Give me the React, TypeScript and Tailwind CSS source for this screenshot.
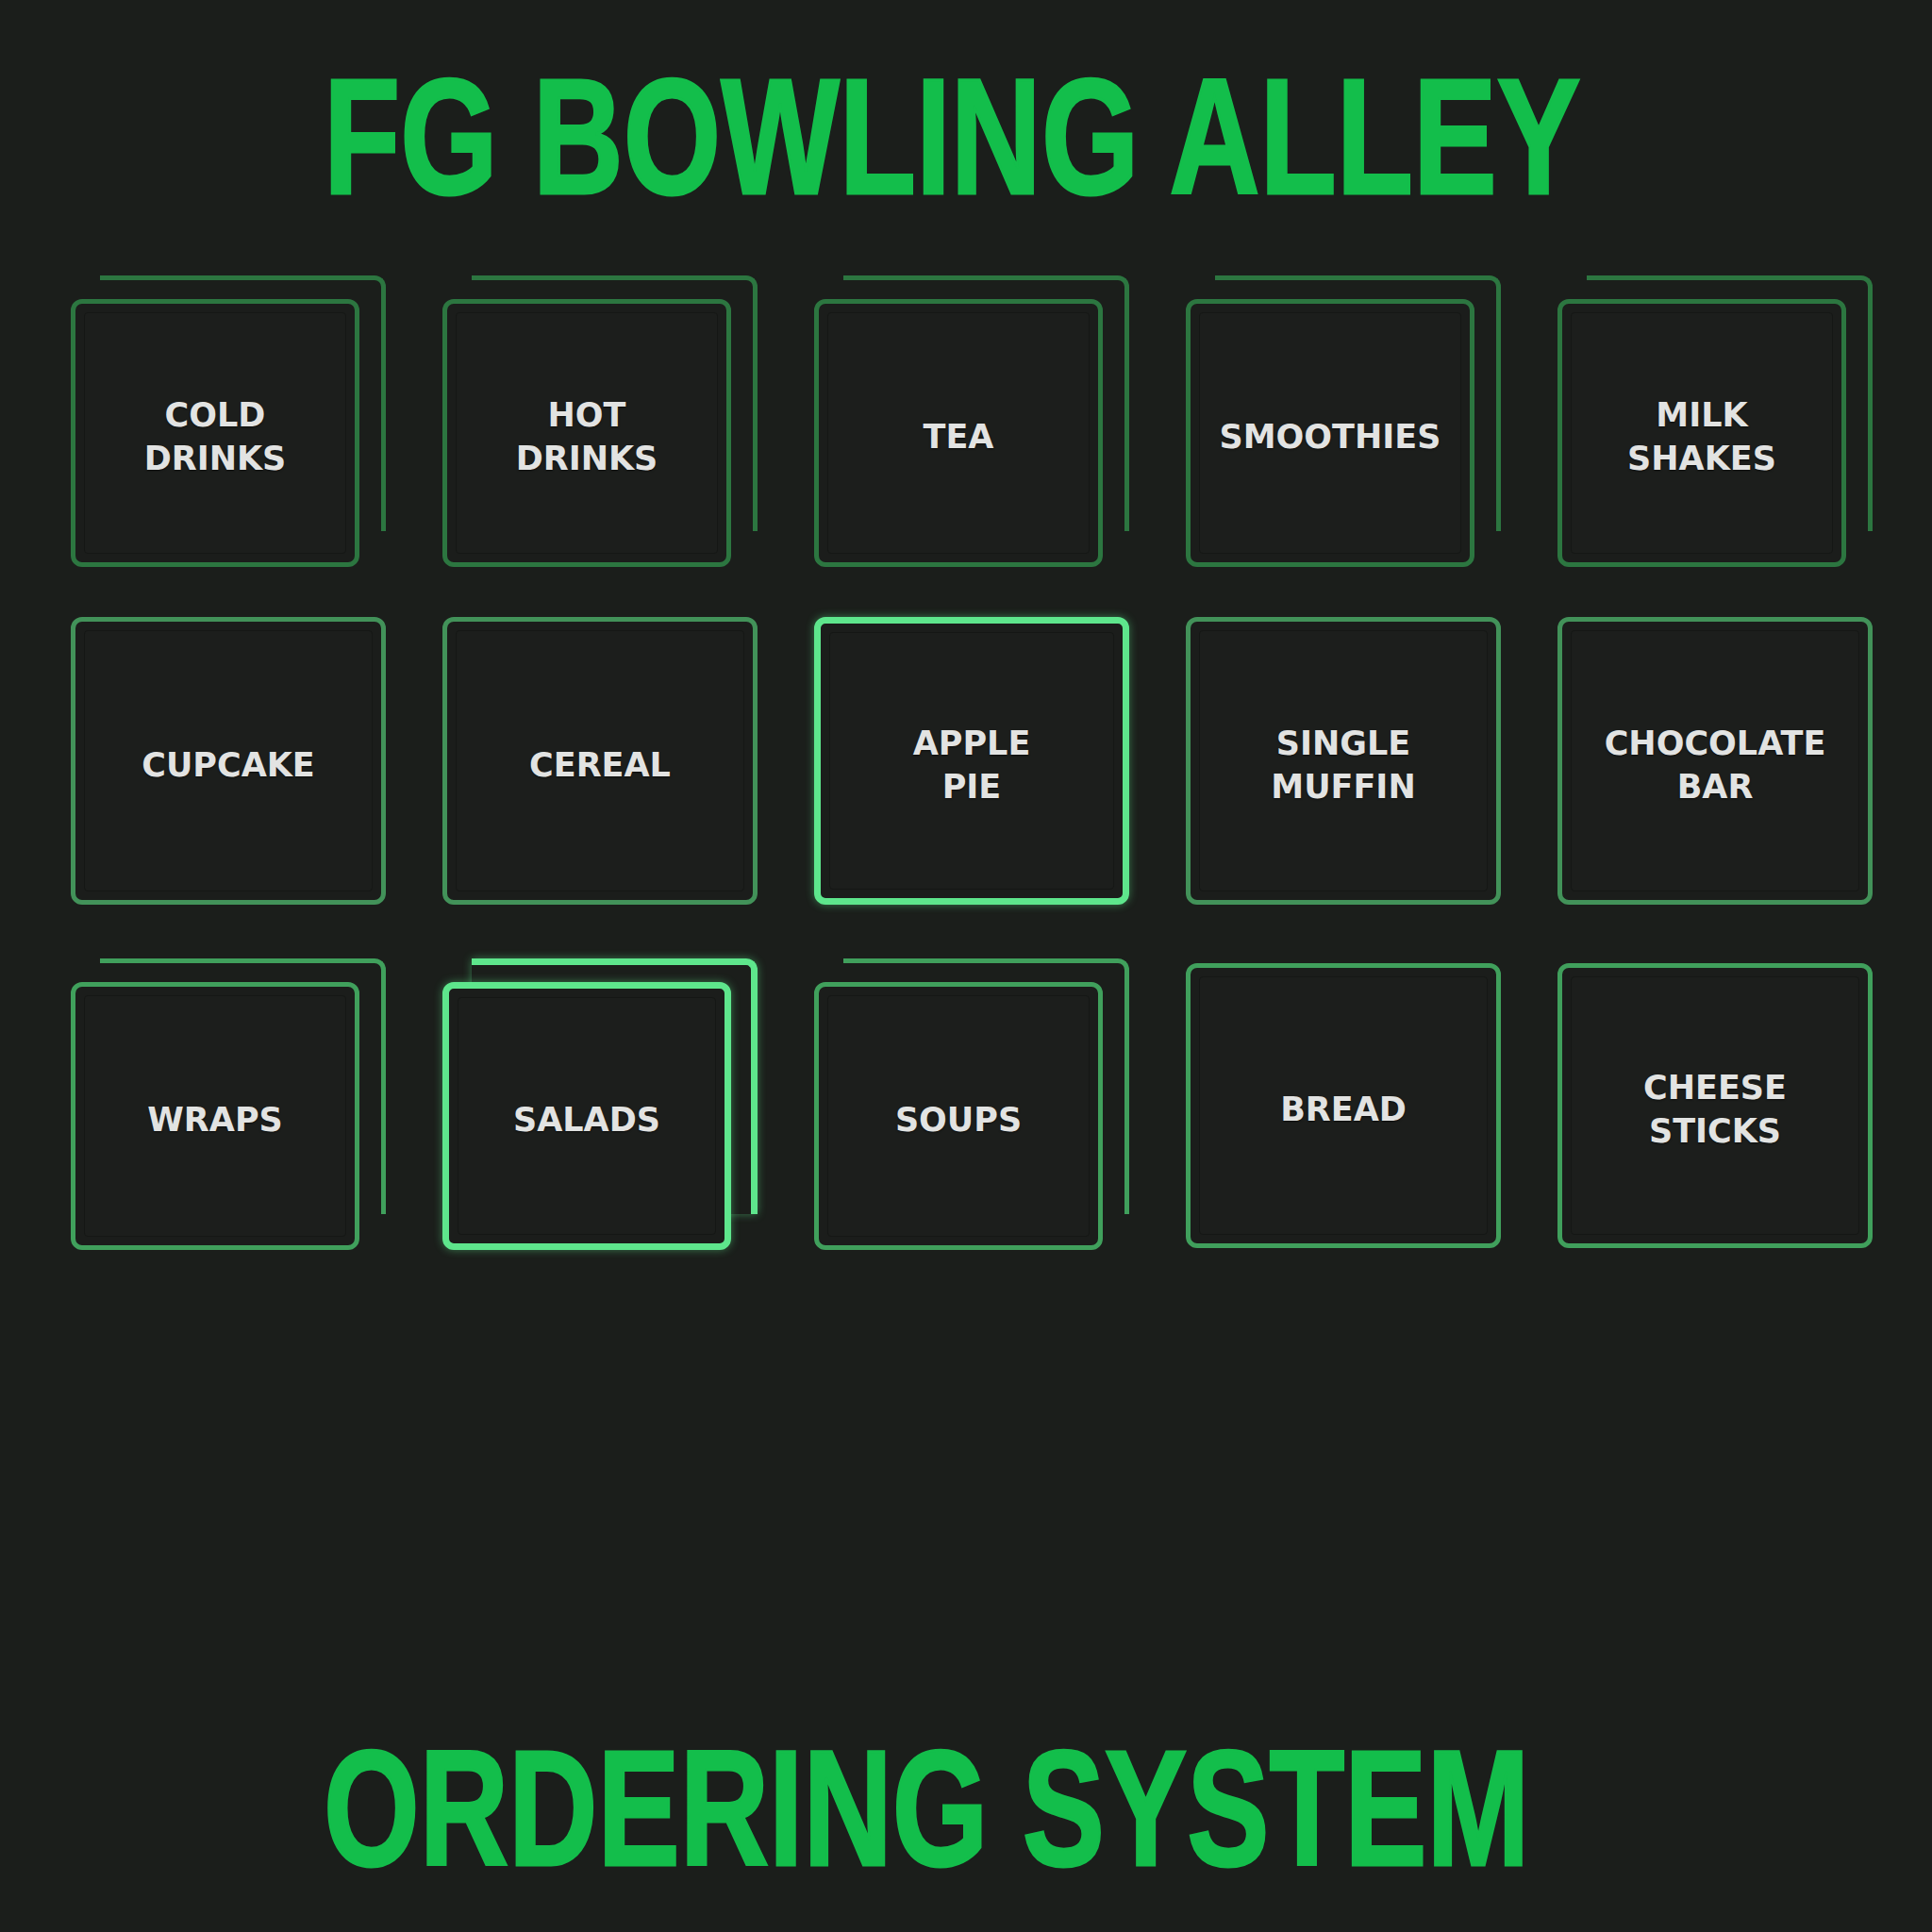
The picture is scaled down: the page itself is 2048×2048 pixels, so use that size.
import { ReactNode } from 'react'

type Tone = 'r1' | 'r2' | 'r3' | 'hot'

type Tile = {
  lines: string[]
  stacked?: boolean
  tone: Tone
  extra?: string
}

const borders: Record<Tone, string> = {
  r1: 'border-[#2c7640]',
  r2: 'border-[#429259]',
  r3: 'border-[#40a05c]',
  hot: 'border-[#5ee68c] shadow-[0_0_10px_rgba(94,230,140,0.45)]',
}

const widths: Record<Tone, string> = {
  r1: 'border-[5px]',
  r2: 'border-[5px]',
  r3: 'border-[5px]',
  hot: 'border-[7px]',
}

const backWidths: Record<Tone, string> = {
  r1: 'border-t-[5px] border-r-[5px]',
  r2: 'border-t-[5px] border-r-[5px]',
  r3: 'border-t-[5px] border-r-[5px]',
  hot: 'border-t-[7px] border-r-[7px]',
}

const tiles: Tile[] = [
  { lines: ['COLD', 'DRINKS'], stacked: true, tone: 'r1' },
  { lines: ['HOT', 'DRINKS'], stacked: true, tone: 'r1' },
  { lines: ['TEA'], stacked: true, tone: 'r1' },
  { lines: ['SMOOTHIES'], stacked: true, tone: 'r1' },
  { lines: ['MILK', 'SHAKES'], stacked: true, tone: 'r1' },

  { lines: ['CUPCAKE'], tone: 'r2' },
  { lines: ['CEREAL'], tone: 'r2' },
  { lines: ['APPLE', 'PIE'], tone: 'hot' },
  { lines: ['SINGLE', 'MUFFIN'], tone: 'r2' },
  { lines: ['CHOCOLATE', 'BAR'], tone: 'r2' },

  { lines: ['WRAPS'], stacked: true, tone: 'r3' },
  { lines: ['SALADS'], stacked: true, tone: 'hot' },
  { lines: ['SOUPS'], stacked: true, tone: 'r3' },
  { lines: ['BREAD'], tone: 'r3', extra: 'mt-[5px] h-[302px]' },
  { lines: ['CHEESE', 'STICKS'], tone: 'r3', extra: 'mt-[5px] h-[302px]' },
]

function Face({ tone, className, children }: { tone: Tone; className: string; children: ReactNode }) {
  return (
    <button
      className={
        borders[tone] +
        ' ' +
        widths[tone] +
        ' ' +
        className +
        ' rounded-[12px] bg-[#1b1d1b] p-[9px]'
      }
    >
      <div className="flex h-full w-full items-center justify-center rounded-[4px] border border-[#151715] bg-[#1c1e1c] pt-[8px]">
        <p className="font-['DejaVu_Sans','Verdana',sans-serif] text-[35px] font-bold leading-[46px] text-[#e2e3e2] [text-shadow:0_1px_2px_rgba(0,0,0,0.6)]">
          {children}
        </p>
      </div>
    </button>
  )
}

function Cell({ tile }: { tile: Tile }) {
  const text = tile.lines.map((l, i) => (
    <span key={i} className="block">
      {l}
    </span>
  ))

  if (!tile.stacked) {
    return (
      <Face tone={tile.tone} className={'w-full ' + (tile.extra ?? 'h-full')}>
        {text}
      </Face>
    )
  }

  return (
    <div className="relative flex h-full w-full items-start">
      {/* card behind */}
      <div
        className={
          borders[tile.tone] +
          ' ' +
          backWidths[tile.tone] +
          ' absolute right-0 top-0 h-[271px] w-[303px] rounded-tr-[12px]'
        }
      ></div>
      <Face tone={tile.tone} className="relative mt-[25px] h-[284px] w-[306px] shrink-0">
        {text}
      </Face>
    </div>
  )
}

export default function App() {
  return (
    <div className="flex h-[2048px] w-[2048px] flex-col overflow-hidden bg-[#1b1e1b]">
      <h1 className="whitespace-nowrap pl-[343px] pt-[57px] font-['Liberation_Sans','Arial',sans-serif] text-[175px] font-bold leading-none text-[#13be4b]">
        <span className="inline-block origin-left scale-x-[0.76] [-webkit-text-stroke:3px_#13be4b]">
          FG BOWLING ALLEY
        </span>
      </h1>

      <div className="ml-[75px] mt-[60px] grid grid-cols-[repeat(5,334px)] grid-rows-[repeat(3,305px)] gap-x-[60px] gap-y-[57px]">
        {tiles.map((t, i) => (
          <Cell key={i} tile={t} />
        ))}
      </div>

      <h2 className="mt-[508px] whitespace-nowrap pl-[343px] font-['Liberation_Sans','Arial',sans-serif] text-[175px] font-bold leading-none text-[#13be4b]">
        <span className="inline-block origin-left scale-x-[0.747] [-webkit-text-stroke:3px_#13be4b]">
          ORDERING SYSTEM
        </span>
      </h2>
    </div>
  )
}
